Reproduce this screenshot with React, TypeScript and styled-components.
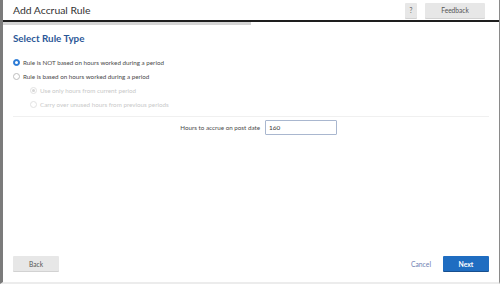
import styled, { createGlobalStyle } from "styled-components";

const GlobalStyle = createGlobalStyle`
  html, body {
    margin: 0;
    padding: 0;
    background: #fff;
  }
  body {
    font-family: Lato, "Open Sans", "Liberation Sans", sans-serif;
    color: #444;
  }
  * {
    box-sizing: border-box;
  }
`;

const Frame = styled.div`
  width: 500px;
  height: 284px;
  display: flex;
  flex-direction: column;
  border-left: 3px solid #7b7b7b;
  border-right: 1px solid #8a8a8a;
  border-bottom: 2px solid #ececec;
  background: #fff;
`;

const Header = styled.header`
  height: 22px;
  display: flex;
  align-items: center;
  justify-content: space-between;
  padding: 0 14px 0 10px;
  border-bottom: 2px solid #1e1e1e;
`;

const Title = styled.h1`
  margin: 0;
  font-size: 10.4px;
  font-weight: 400;
  color: #333;
`;

const HeaderActions = styled.div`
  display: flex;
  gap: 8px;
`;

const GreyButton = styled.button<{ $width: number }>`
  width: ${(p) => p.$width}px;
  height: 15px;
  padding: 0;
  border: none;
  border-radius: 1px;
  background: #e7e7e7;
  box-shadow: 0 1px 0 #d2d2d2;
  font: inherit;
  font-size: 6.6px;
  color: #555;
  cursor: pointer;
`;

const ProgressTrack = styled.div`
  height: 3px;
  background: #fff;
`;

const ProgressBar = styled.div`
  height: 100%;
  background: #d4d4d4;
`;

const Body = styled.main`
  flex: 1;
  padding: 5px 10px 0;
  display: flex;
  flex-direction: column;
`;

const SectionTitle = styled.h2`
  margin: 0 0 9px;
  font-size: 9.8px;
  line-height: 16px;
  font-weight: 700;
  color: #2b5797;
`;

const OptionList = styled.div`
  display: flex;
  flex-direction: column;
`;

const OptionRow = styled.label<{ $indent?: boolean; $disabled?: boolean }>`
  height: 14px;
  display: flex;
  align-items: center;
  gap: 3px;
  padding-left: ${(p) => (p.$indent ? 17 : 0)}px;
  font-size: 6.25px;
  color: ${(p) => (p.$disabled ? "#c9c9c9" : "#4a4a4a")};
`;

const Radio = styled.span<{ $checked?: boolean; $disabled?: boolean }>`
  width: 7px;
  height: 7px;
  border-radius: 50%;
  flex: none;
  display: flex;
  align-items: center;
  justify-content: center;
  border: 1px solid
    ${(p) => (p.$checked && !p.$disabled ? "#2b7bd6" : p.$disabled ? "#e2e2e2" : "#bdbdbd")};
  background: ${(p) => (p.$checked && !p.$disabled ? "#2b7bd6" : "#fff")};

  &::after {
    content: "";
    width: 3px;
    height: 3px;
    border-radius: 50%;
    background: ${(p) => (p.$disabled ? "#d6d6d6" : "#fff")};
    display: ${(p) => (p.$checked ? "block" : "none")};
  }
`;

const Divider = styled.hr`
  margin: 5px 0 3px;
  border: none;
  border-top: 1px solid #f0f0f0;
`;

const FieldRow = styled.div`
  display: grid;
  grid-template-columns: 247px 72px;
  gap: 5px;
  align-items: center;
`;

const FieldLabel = styled.label`
  text-align: right;
  font-size: 6.25px;
  color: #4a4a4a;
`;

const TextInput = styled.input`
  height: 15px;
  padding: 0 3px;
  border: 1px solid #a9b7cf;
  border-radius: 1px;
  font: inherit;
  font-size: 6.4px;
  color: #333;
  outline: none;
`;

const Footer = styled.footer`
  display: flex;
  align-items: flex-end;
  padding: 0 10px 11px;
`;

const CancelLink = styled.button`
  margin-left: auto;
  margin-right: 12px;
  height: 15px;
  padding: 0;
  border: none;
  background: none;
  font: inherit;
  font-size: 6.8px;
  color: #6f82b3;
  cursor: pointer;
`;

const PrimaryButton = styled.button`
  width: 46px;
  height: 15px;
  padding: 0;
  border: none;
  border-radius: 1px;
  background: #1f6dc1;
  box-shadow: 0 1px 0 #174f8e;
  font: inherit;
  font-size: 6.8px;
  font-weight: 700;
  color: #fff;
  cursor: pointer;
`;

const options = [
  { label: "Rule is NOT based on hours worked during a period", checked: true },
  { label: "Rule is based on hours worked during a period" },
  { label: "Use only hours from current period", checked: true, indent: true, disabled: true },
  { label: "Carry over unused hours from previous periods", indent: true, disabled: true },
];

export default function App() {
  const step = 1;
  const steps = 2;

  return (
    <>
      <GlobalStyle />
      <Frame>
        <Header>
          <Title>Add Accrual Rule</Title>
          <HeaderActions>
            <GreyButton $width={12}>?</GreyButton>
            <GreyButton $width={60}>Feedback</GreyButton>
          </HeaderActions>
        </Header>
        <ProgressTrack>
          <ProgressBar style={{ width: `${(step / steps) * 100}%` }} />
        </ProgressTrack>
        <Body>
          <SectionTitle>Select Rule Type</SectionTitle>
          <OptionList>
            {options.map((o) => (
              <OptionRow key={o.label} $indent={o.indent} $disabled={o.disabled}>
                <Radio $checked={o.checked} $disabled={o.disabled} />
                {o.label}
              </OptionRow>
            ))}
          </OptionList>
          <Divider />
          <FieldRow>
            <FieldLabel htmlFor="hours">Hours to accrue on post date</FieldLabel>
            <TextInput id="hours" defaultValue="160" />
          </FieldRow>
        </Body>
        <Footer>
          <GreyButton $width={46}>Back</GreyButton>
          <CancelLink>Cancel</CancelLink>
          <PrimaryButton>Next</PrimaryButton>
        </Footer>
      </Frame>
    </>
  );
}
